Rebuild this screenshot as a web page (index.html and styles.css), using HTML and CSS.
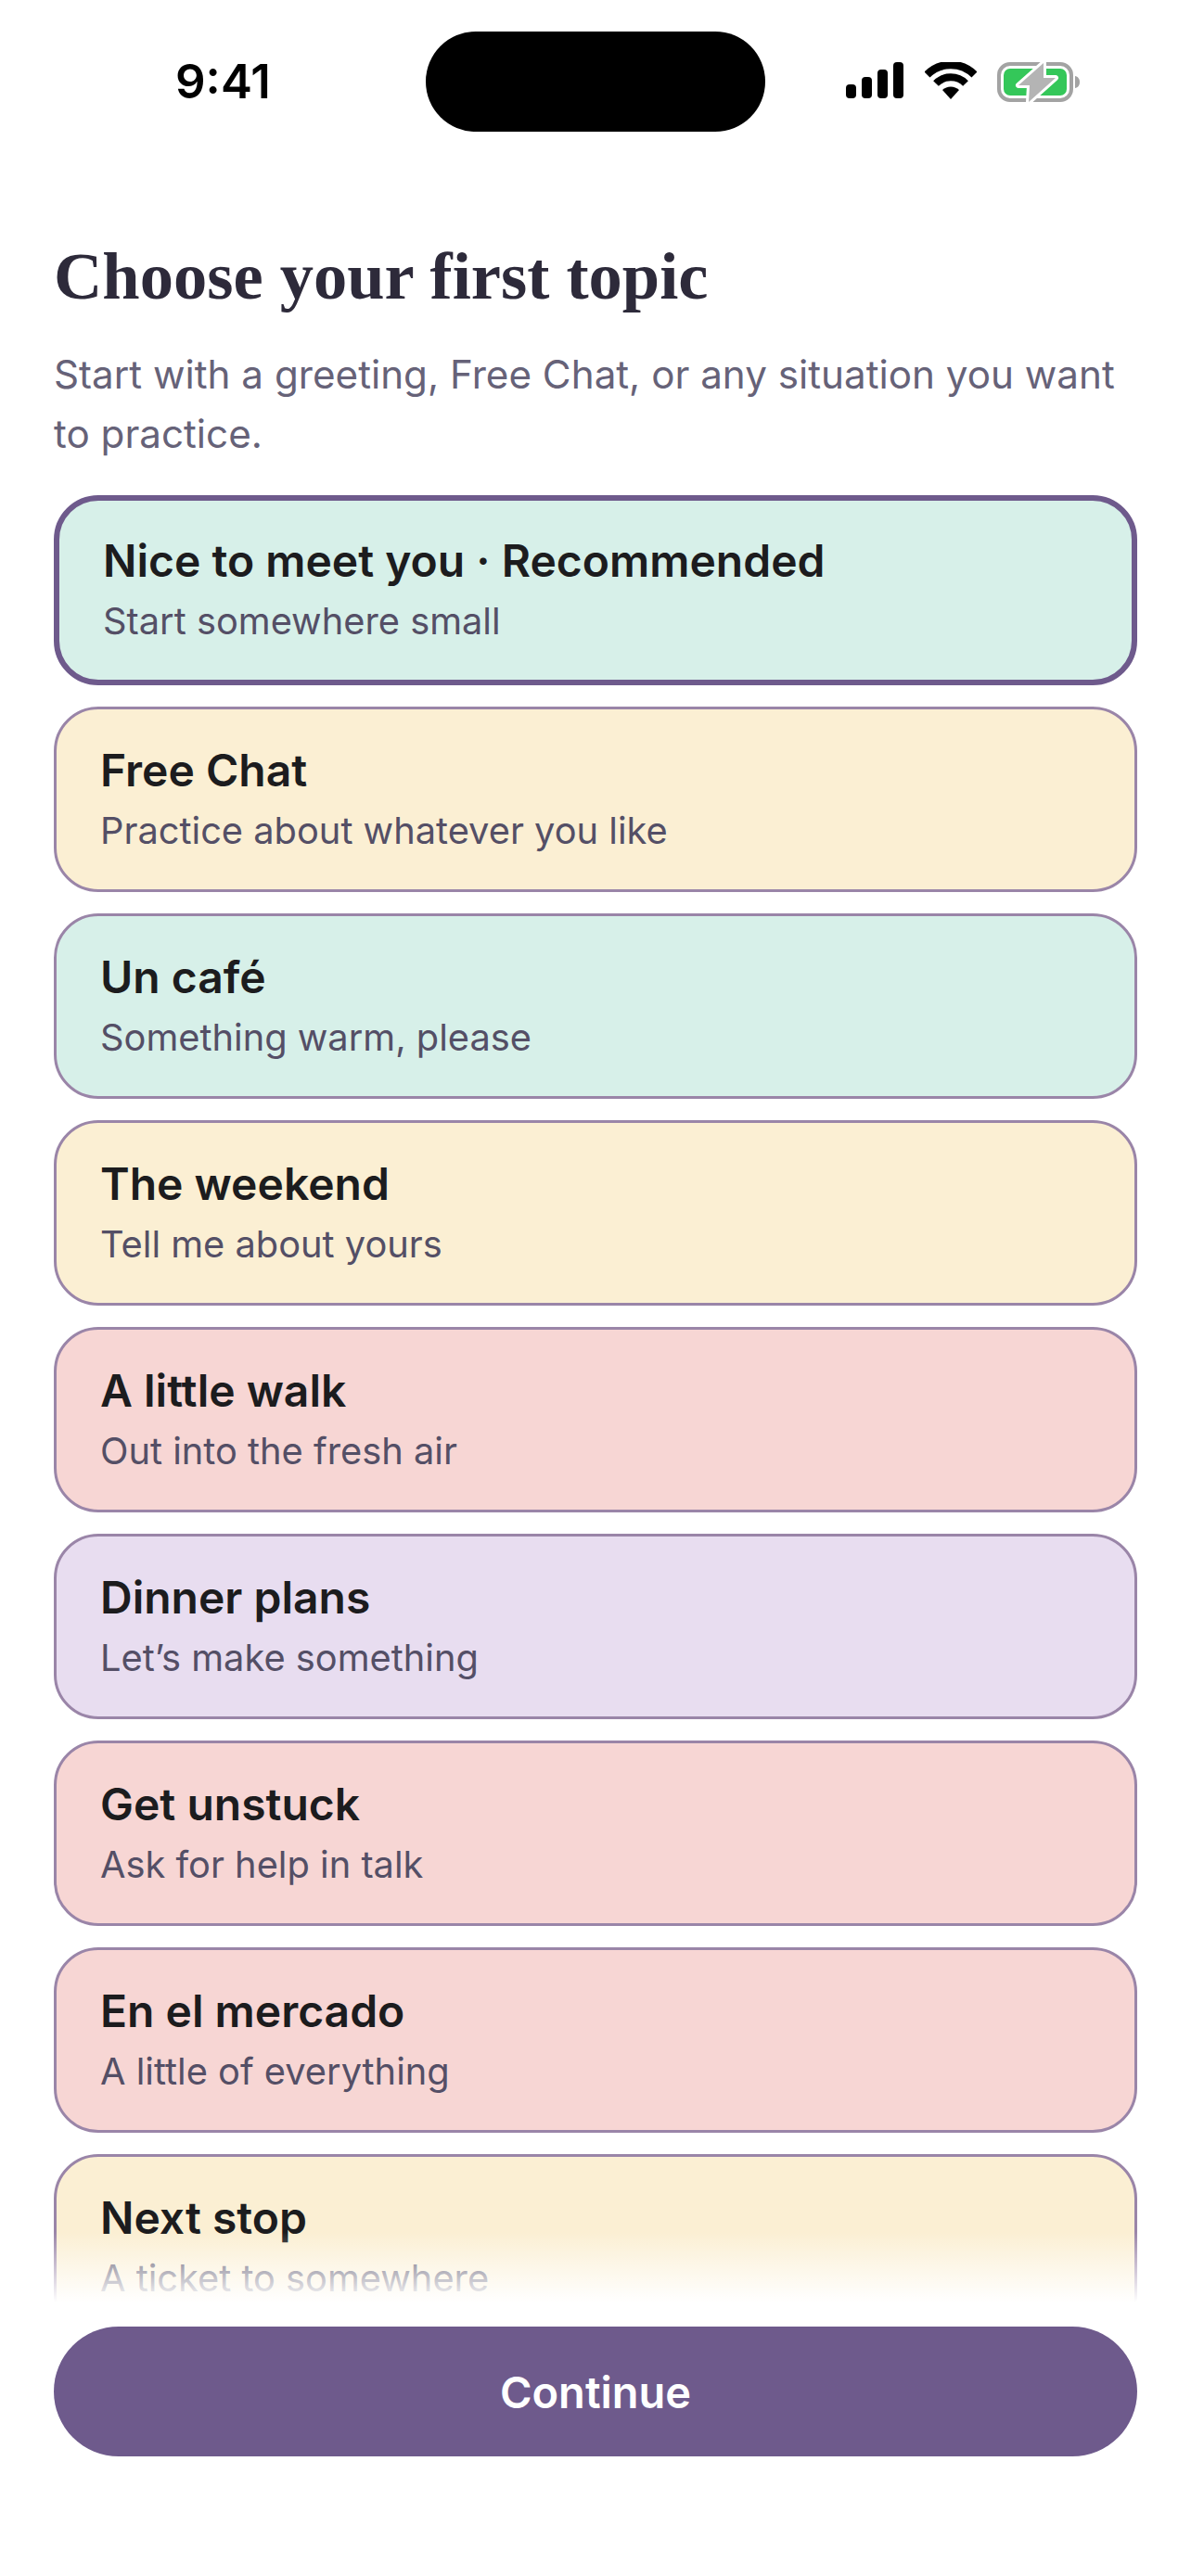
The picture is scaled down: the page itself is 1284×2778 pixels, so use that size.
FILE: index.html
```html
<!DOCTYPE html>
<html lang="en">
<head>
    <meta charset="UTF-8">
    <title>Choose your first topic</title>
    <link rel="stylesheet" href="styles.css">
</head>
<body>
<div class="screen">
    <div class="status">
        <span class="time">9:41</span>
        <div class="island"></div>
        <div class="status-icons">
            <svg class="signal" width="62" height="39" viewBox="0 0 62 39">
                <rect x="0" y="24" width="11" height="15" rx="4"/>
                <rect x="17" y="16" width="11" height="23" rx="4"/>
                <rect x="34" y="8" width="11" height="31" rx="4"/>
                <rect x="51" y="0" width="11" height="39" rx="4"/>
            </svg>
            <svg class="wifi" width="56" height="40" viewBox="0 0 56 40">
                <path d="M2.5 13.5a36 36 0 0 1 51 0" fill="none" stroke="#000" stroke-width="8.5"/>
                <path d="M12 23a22.500 22.500 0 0 1 32 0" fill="none" stroke="#000" stroke-width="8"/>
                <path d="M19 30a13 13 0 0 1 18 0l-9 10z"/>
            </svg>
            <svg class="battery" width="90" height="44" viewBox="0 0 90 44">
                <rect x="2" y="2" width="78" height="39" rx="12" fill="none" stroke="#a3a3a3" stroke-width="4"/>
                <rect x="7" y="7" width="68" height="29" rx="7" fill="#34c759"/>
                <path d="M84 15c3 .5 5 3 5 6.500s-2 6-5 6.500z" fill="#a3a3a3"/>
                <path d="M50 1L23 25h12l-1 18 29-26H50z" fill="#b4b4b4" stroke="#fff" stroke-width="6" stroke-linejoin="round" paint-order="stroke"/>
            </svg>
        </div>
    </div>

    <div class="intro">
        <h1>Choose your first topic</h1>
        <p>Start with a greeting, Free Chat, or any situation you want to practice.</p>
    </div>

    <div class="list">
        <div class="card mint selected">
            <div class="card-title">Nice to meet you · Recommended</div>
            <div class="card-sub">Start somewhere small</div>
        </div>
        <div class="card cream">
            <div class="card-title">Free Chat</div>
            <div class="card-sub">Practice about whatever you like</div>
        </div>
        <div class="card mint">
            <div class="card-title">Un café</div>
            <div class="card-sub">Something warm, please</div>
        </div>
        <div class="card cream">
            <div class="card-title">The weekend</div>
            <div class="card-sub">Tell me about yours</div>
        </div>
        <div class="card pink">
            <div class="card-title">A little walk</div>
            <div class="card-sub">Out into the fresh air</div>
        </div>
        <div class="card lavender">
            <div class="card-title">Dinner plans</div>
            <div class="card-sub">Let’s make something</div>
        </div>
        <div class="card pink">
            <div class="card-title">Get unstuck</div>
            <div class="card-sub">Ask for help in talk</div>
        </div>
        <div class="card pink">
            <div class="card-title">En el mercado</div>
            <div class="card-sub">A little of everything</div>
        </div>
        <div class="card cream">
            <div class="card-title">Next stop</div>
            <div class="card-sub">A ticket to somewhere</div>
        </div>
    </div>

    <div class="footer">
        <div class="continue">Continue</div>
    </div>
</div>
</body>
</html>
```
FILE: styles.css
```css
* {
    padding: 0;
    margin: 0;
    box-sizing: border-box;
}

body {
    background: #fff;
    font-family: Inter, "Noto Sans", sans-serif;
}

.screen {
    width: 1284px;
    height: 2778px;
    display: flex;
    flex-direction: column;
    overflow: hidden;
    background: #fff;
}

.status {
    height: 258px;
    flex: none;
    padding-top: 34px;
    display: grid;
    grid-template-columns: 459px 366px 1fr;
    align-items: start;
}

.time {
    justify-self: start;
    margin: 27px 0 0 189px;
    font-size: 51px;
    line-height: 54px;
    font-weight: 600;
    color: #000;
}

.island {
    height: 108px;
    border-radius: 54px;
    background: #000;
}

.status-icons {
    display: flex;
    align-items: flex-start;
    margin: 33px 0 0 87px;
}

.wifi {
    margin-left: 23px;
}

.battery {
    margin-left: 22px;
}

.intro {
    flex: none;
    padding: 0 58px;
}

h1 {
    font-family: "Liberation Serif", serif;
    font-size: 72.5px;
    line-height: 80px;
    font-weight: 700;
    color: #2d2a3a;
}

.intro p {
    margin-top: 34px;
    font-size: 42.2px;
    line-height: 64px;
    color: #666278;
}

.list {
    flex: 1;
    min-height: 0;
    margin-top: 34px;
    padding: 0 58px;
    display: flex;
    flex-direction: column;
    gap: 23px;
    overflow: hidden;
    position: relative;
}

/* white fade above the button */
.list:after {
    content: "";
    position: absolute;
    left: 0;
    right: 0;
    bottom: 0;
    height: 76px;
    background: linear-gradient(rgba(255, 255, 255, 0), #fff);
}

.card {
    flex: none;
    height: 200px;
    padding: 36px 47px 0;
    border: 3px solid #9a85a8;
    border-radius: 48px;
}

.card.selected {
    height: 205px;
    padding-top: 35px;
    border: 6px solid #6e5a8c;
}

.mint {
    background: #d7f0e9;
}

.cream {
    background: #fbefd3;
}

.pink {
    background: #f7d6d4;
}

.lavender {
    background: #e8ddf0;
}

.card-title {
    font-size: 48px;
    line-height: 60px;
    font-weight: 600;
    color: #1c1c1e;
}

.card-sub {
    margin-top: 5px;
    font-size: 39.8px;
    line-height: 60px;
    color: #544f66;
}

.footer {
    flex: none;
    height: 295px;
    padding: 26px 58px 0;
}

.continue {
    height: 140px;
    border-radius: 70px;
    background: #6e5a8c;
    color: #fff;
    font-size: 47px;
    font-weight: 600;
    display: flex;
    align-items: center;
    justify-content: center;
}
```
